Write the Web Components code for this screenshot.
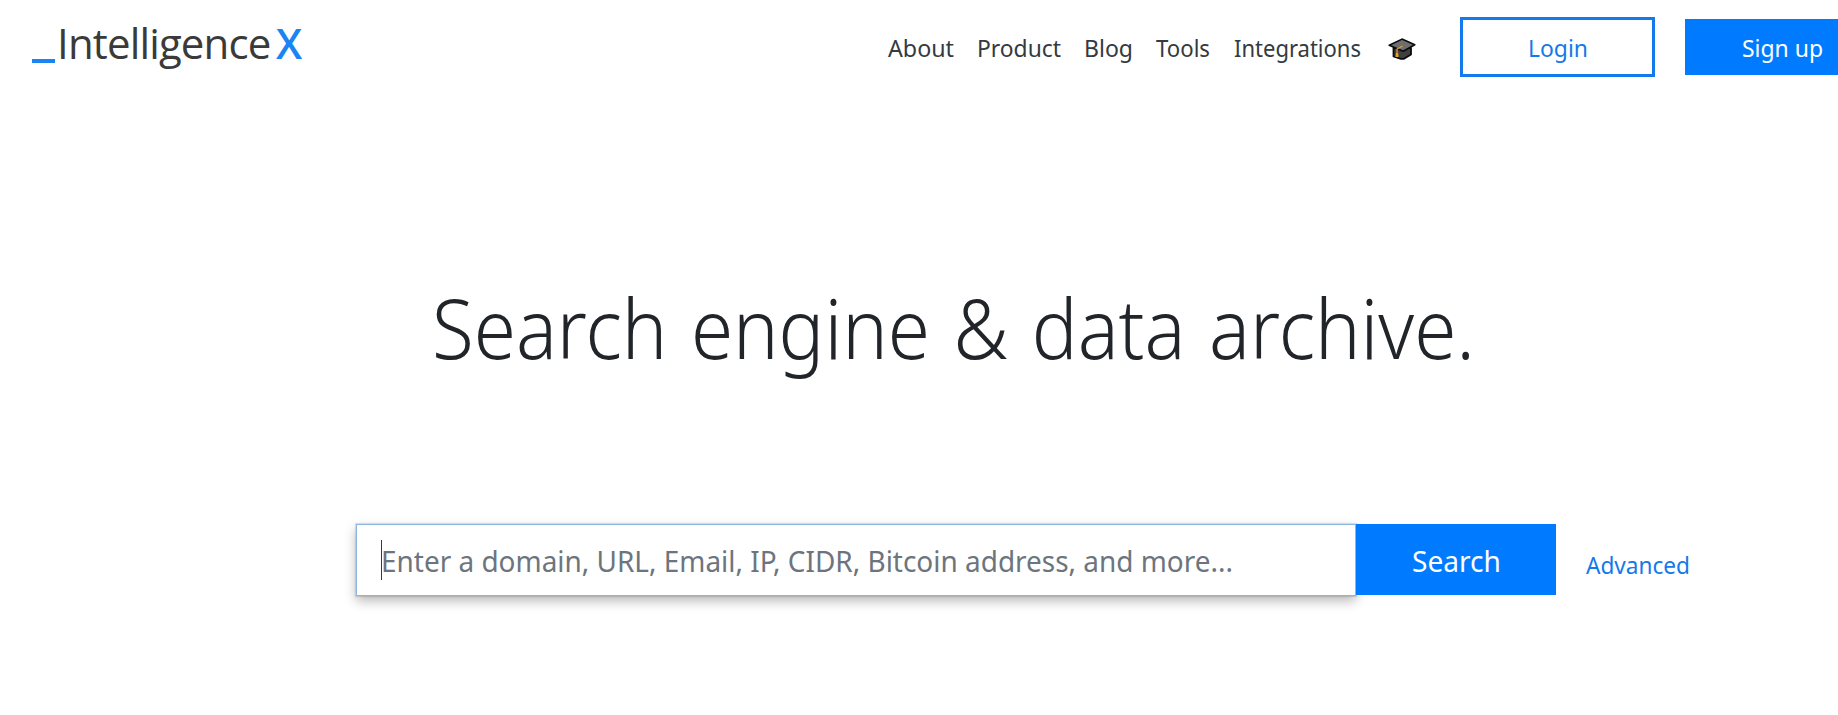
<!DOCTYPE html>
<html lang="en">
<head>
<meta charset="utf-8">
<title>Intelligence X</title>
<style>
html, body {
    margin: 0;
    height: 100%;
    background: #fff;
    overflow: hidden;
}
</style>
</head>
<body>
<ix-page></ix-page>

<script>
// a line of text set to an exact width
class FitText extends HTMLElement {
    constructor(){
        super();
        this.attachShadow({mode:"open"});
    }

    connectedCallback(){
        const a = (name, def) => this.getAttribute(name) || def;
        this.shadowRoot.innerHTML = `
        <style>
        :host { display: block; flex-shrink: 0; }
        svg { display: block; overflow: visible; }
        text {
            fill: currentColor;
            font-family: "Noto Sans", "Open Sans", sans-serif;
            font-size: ${a("size", "23.8")}px;
            font-weight: ${a("weight", "400")};
            word-spacing: ${a("spacing", "0")}px;
        }
        </style>
        <svg width="${a("width")}" height="${a("height", "32")}">
            <text x="0" y="${a("baseline", "26")}" textLength="${a("width")}" lengthAdjust="spacingAndGlyphs"></text>
        </svg>`;
        this.shadowRoot.querySelector("text").textContent = a("label", "");
    }
}
customElements.define("fit-text", FitText);


var template_logo = document.createElement("template");
template_logo.innerHTML = `
<style>
:host {
    display: flex;
    height: 60px;
    font: 400 42px/51px "Open Sans", sans-serif;
    color: #3a3a3a;
}
.bar { width: 23px; height: 4px; margin-top: 42px; background: #1b84f3; }
.name { width: 214px; margin-left: 2px; letter-spacing: -.85px; }
.x { margin-left: 5px; font-weight: 600; color: #1b84f3; }
</style>
<div class="bar"></div>
<div class="name">Intelligence</div>
<div class="x">X</div>
`;

class IxLogo extends HTMLElement {
    constructor(){
        super();
        this.attachShadow({mode:"open"});
    }
    connectedCallback(){
        this.shadowRoot.appendChild(template_logo.content.cloneNode(true));
    }
}
customElements.define("ix-logo", IxLogo);


var template_cap = document.createElement("template");
template_cap.innerHTML = `
<style>
:host { display: block; }
svg { display: block; }
</style>
<svg width="28" height="22" viewBox="0 0 28 22">
    <path d="M5.5 10v8.5l7.5 2.3h3l7-4.3V10z" fill="#3f3f3f" stroke="#0b0b0b" stroke-width="1.8" stroke-linejoin="round"/>
    <path d="M1.2 7.2 14 1.1l12.8 5.6-11.6 6.6z" fill="#6e6e6e" stroke="#0b0b0b" stroke-width="1.6" stroke-linejoin="round"/>
    <path d="M14.5 8 9 11v5" fill="none" stroke="#e8a02c" stroke-width="1.2"/>
    <path d="M8 15h2.2l.4 4H7.4z" fill="#e8a02c"/>
</svg>
`;

class IxCap extends HTMLElement {
    constructor(){
        super();
        this.attachShadow({mode:"open"});
    }
    connectedCallback(){
        this.shadowRoot.appendChild(template_cap.content.cloneNode(true));
    }
}
customElements.define("ix-cap", IxCap);


var template_button = document.createElement("template");
template_button.innerHTML = `
<style>
:host {
    display: flex;
    align-items: center;
    justify-content: center;
    box-sizing: border-box;
    flex-shrink: 0;
    background: #007bff;
    color: #fff;
}
:host([outline]) {
    background: #fff;
    border: 3px solid #1479ea;
    color: #1479ea;
}
</style>
<slot></slot>
`;

class IxButton extends HTMLElement {
    constructor(){
        super();
        this.attachShadow({mode:"open"});
    }
    connectedCallback(){
        this.shadowRoot.appendChild(template_button.content.cloneNode(true));
    }
}
customElements.define("ix-button", IxButton);


var template_header = document.createElement("template");
template_header.innerHTML = `
<style>
:host {
    display: flex;
    align-items: center;
    height: 60px;
    padding: 17px 0 0 32px;
}
nav {
    display: flex;
    align-items: center;
    flex-shrink: 0;
    gap: 23px;
    margin-left: auto;
    color: #343a40;
}
.wide { margin: 0 1px; }
ix-cap { margin: 3px 0 0 3px; }
.login { width: 195px; height: 60px; margin-left: 44px; }
.signup { width: 195px; height: 56px; margin: 0 -42px 0 30px; }
</style>
<ix-logo></ix-logo>
<nav>
    <fit-text label="About" width="66"></fit-text>
    <fit-text label="Product" width="84"></fit-text>
    <fit-text label="Blog" width="49"></fit-text>
    <fit-text label="Tools" width="54"></fit-text>
    <fit-text class="wide" label="Integrations" width="127"></fit-text>
    <ix-cap></ix-cap>
</nav>
<ix-button class="login" outline><fit-text label="Login" width="60"></fit-text></ix-button>
<ix-button class="signup"><fit-text label="Sign up" width="81"></fit-text></ix-button>
`;

class IxHeader extends HTMLElement {
    constructor(){
        super();
        this.attachShadow({mode:"open"});
    }
    connectedCallback(){
        this.shadowRoot.appendChild(template_header.content.cloneNode(true));
    }
}
customElements.define("ix-header", IxHeader);


var template_search = document.createElement("template");
template_search.innerHTML = `
<style>
:host { display: flex; align-items: flex-start; }
.field {
    display: flex;
    align-items: center;
    box-sizing: border-box;
    width: 1000px;
    height: 72px;
    padding-left: 24px;
    border: 1px solid #8db4dc;
    background: #fff;
    color: #6c757d;
    box-shadow: 0 0 1px 1px rgba(0,0,0,.1), 0 5px 11px rgba(0,0,0,.28);
}
.caret { width: 1px; height: 40px; margin-right: -1px; background: #343a40; }
.go { position: relative; width: 200px; height: 71px; }
.adv { margin: 24px 0 0 30px; color: #1479ea; }
</style>
<div class="field">
    <div class="caret"></div>
    <fit-text label="Enter a domain, URL, Email, IP, CIDR, Bitcoin address, and more..." size="29.8" width="852" height="40" baseline="32"></fit-text>
</div>
<ix-button class="go"><fit-text label="Search" size="29.8" width="89" height="40" baseline="31.5"></fit-text></ix-button>
<fit-text class="adv" label="Advanced" width="104"></fit-text>
`;

class IxSearch extends HTMLElement {
    constructor(){
        super();
        this.attachShadow({mode:"open"});
    }
    connectedCallback(){
        this.shadowRoot.appendChild(template_search.content.cloneNode(true));
    }
}
customElements.define("ix-search", IxSearch);


var template_page = document.createElement("template");
template_page.innerHTML = `
<style>
:host { display: flex; flex-direction: column; }
h1 { margin: 193px 0 0 432px; font-weight: normal; color: #212529; }
ix-search { margin: 134px 0 0 356px; }
</style>
<ix-header></ix-header>
<h1><fit-text label="Search engine &amp; data archive." size="82" weight="265" spacing="4" width="1043" height="120" baseline="89.3"></fit-text></h1>
<ix-search></ix-search>
`;

class IxPage extends HTMLElement {
    constructor(){
        super();
        this.attachShadow({mode:"open"});
    }
    connectedCallback(){
        this.shadowRoot.appendChild(template_page.content.cloneNode(true));
    }
}
customElements.define("ix-page", IxPage);
</script>
</body>
</html>
